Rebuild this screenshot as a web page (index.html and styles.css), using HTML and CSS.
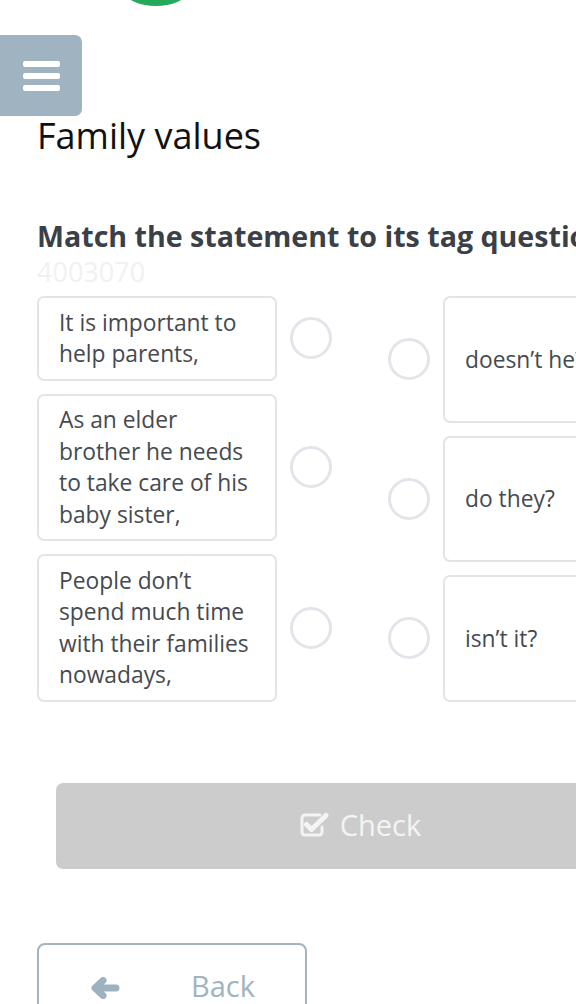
FILE: index.html
```html
<!DOCTYPE html>
<html lang="en">
<head>
<meta charset="utf-8">
<title>Family values</title>
<link rel="stylesheet" href="styles.css">
</head>
<body>
<div class="page">
  <div class="logo-circle"></div>
  <button class="menu-btn" aria-label="Menu">
    <span class="bar"></span><span class="bar"></span><span class="bar"></span>
  </button>
  <h1 class="title">Family values</h1>
  <h2 class="task">Match the statement to its tag question</h2>
  <div class="task-id">4003070</div>

  <div class="match">
    <div class="side left">
      <div class="row">
        <div class="card">It is important to help parents,</div>
        <span class="dot"></span>
      </div>
      <div class="row">
        <div class="card">As an elder brother he needs to take care of his baby sister,</div>
        <span class="dot"></span>
      </div>
      <div class="row">
        <div class="card">People don’t spend much time with their families nowadays,</div>
        <span class="dot"></span>
      </div>
    </div>
    <div class="side right">
      <div class="row">
        <span class="dot"></span>
        <div class="card">doesn’t he?</div>
      </div>
      <div class="row">
        <span class="dot"></span>
        <div class="card">do they?</div>
      </div>
      <div class="row">
        <span class="dot"></span>
        <div class="card">isn’t it?</div>
      </div>
    </div>
  </div>

  <button class="check-btn">
    <svg class="check-icon" viewBox="0 0 30 26" width="30" height="26" aria-hidden="true">
      <path d="M21 3H6a3 3 0 0 0-3 3v14a3 3 0 0 0 3 3h14a3 3 0 0 0 3-3v-5" fill="none" stroke="#f4f4f4" stroke-width="3" stroke-linecap="round" stroke-linejoin="round"/>
      <path d="M7.5 12.5l5 5L27 3.5" fill="none" stroke="#f4f4f4" stroke-width="5" stroke-linecap="round" stroke-linejoin="round"/>
    </svg>
    <span>Check</span>
  </button>

  <button class="back-btn">
    <svg class="back-icon" viewBox="0 0 30 22" width="30" height="22" aria-hidden="true">
      <path d="M26 11H6M13 3.5L5 11l8 7.5" fill="none" stroke="#9db1bf" stroke-width="7" stroke-linecap="round" stroke-linejoin="round"/>
    </svg>
    <span>Back</span>
  </button>
</div>
</body>
</html>
```

FILE: styles.css
```css
html, body {
  margin: 0;
  padding: 0;
  background: #ffffff;
  overflow: hidden;
}

body {
  font-family: "Open Sans", "Noto Sans", sans-serif;
  width: 576px;
  height: 1004px;
}

.page {
  width: 720px;
  padding-left: 37px;
  box-sizing: border-box;
}

.logo-circle {
  width: 114px;
  height: 114px;
  margin-top: -108px;
  margin-left: 62px;
  border-radius: 50%;
  background: #25a95b;
}

.menu-btn {
  display: flex;
  flex-direction: column;
  justify-content: center;
  align-items: center;
  gap: 6px;
  width: 82px;
  height: 81px;
  margin: 29px 0 0 -37px;
  padding: 0;
  border: none;
  border-radius: 0 7px 7px 0;
  background: #9fb3c1;
}

.bar {
  display: block;
  width: 37px;
  height: 6px;
  border-radius: 2px;
  background: #ffffff;
}

.title {
  margin: 0;
  font-size: 36px;
  font-weight: 400;
  line-height: 40px;
  color: #111111;
}

.task {
  margin: 63px 0 0;
  font-size: 28.6px;
  font-weight: 700;
  line-height: 34px;
  color: #3a4047;
  white-space: nowrap;
}

.task-id {
  font-size: 27px;
  line-height: 38px;
  color: #f1f1f1;
}

.match {
  display: flex;
  gap: 56px;
  margin-top: 5px;
}

.side {
  display: flex;
  flex-direction: column;
  gap: 13px;
}

.row {
  display: flex;
  align-items: center;
  gap: 13px;
}

.right .row {
  flex: 1;
  align-items: stretch;
  gap: 13px;
}

.right .dot {
  align-self: center;
}

.card {
  width: 240px;
  box-sizing: border-box;
  padding: 8.75px 16px 8.75px 20px;
  border: 2px solid #e4e4e4;
  border-radius: 7px;
  font-size: 22.8px;
  line-height: 31.5px;
  color: #454a4f;
}

.right .card {
  display: flex;
  align-items: center;
  white-space: nowrap;
}

.dot {
  flex: none;
  width: 42px;
  height: 42px;
  box-sizing: border-box;
  border: 3px solid #e2e5e9;
  border-radius: 50%;
}

.check-btn {
  display: flex;
  justify-content: center;
  align-items: center;
  gap: 11px;
  width: 608px;
  height: 86px;
  margin: 81px 0 0 19px;
  padding-bottom: 3px;
  border: none;
  border-radius: 7px;
  background: #cccccc;
  font-family: "Open Sans", sans-serif;
  font-size: 29px;
  color: #f4f4f4;
}

.back-btn {
  display: flex;
  align-items: flex-start;
  width: 270px;
  height: 90px;
  margin-top: 74px;
  padding: 21px 0 0 51px;
  box-sizing: border-box;
  border: 2px solid #a3b4bf;
  border-radius: 8px;
  background: #ffffff;
  font-family: "Open Sans", sans-serif;
  font-size: 29px;
  line-height: 40px;
  color: #a0b4c0;
}

.back-icon {
  margin-top: 11px;
  margin-right: 71px;
}
```
